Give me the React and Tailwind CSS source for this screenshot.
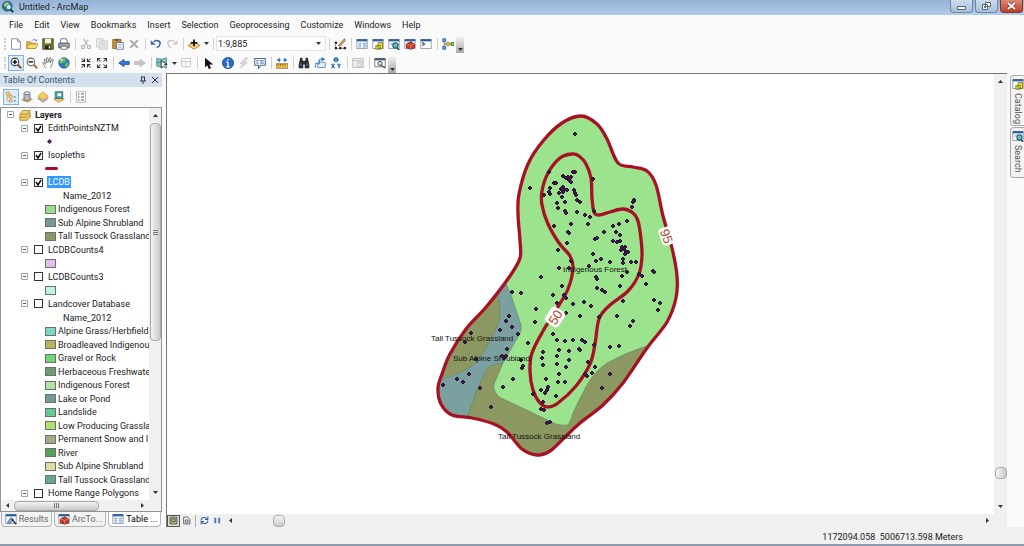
import React, { useState } from "react";

const menus = [
  "File",
  "Edit",
  "View",
  "Bookmarks",
  "Insert",
  "Selection",
  "Geoprocessing",
  "Customize",
  "Windows",
  "Help",
];

const layers = [
  { type: "layer", name: "EdithPointsNZTM", checked: true },
  { type: "point" },
  { type: "layer", name: "Isopleths", checked: true },
  { type: "line" },
  { type: "layer", name: "LCDB", checked: true, selected: true },
  { type: "field", name: "Name_2012" },
  { type: "class", name: "Indigenous Forest", color: "#98e28b" },
  { type: "class", name: "Sub Alpine Shrubland", color: "#6f9b98" },
  { type: "class", name: "Tall Tussock Grassland", color: "#8a9a62" },
  { type: "layer", name: "LCDBCounts4" },
  { type: "class", name: "", color: "#e6bff2" },
  { type: "layer", name: "LCDBCounts3" },
  { type: "class", name: "", color: "#bdf3e2" },
  { type: "layer", name: "Landcover Database" },
  { type: "field", name: "Name_2012" },
  { type: "class", name: "Alpine Grass/Herbfield", color: "#7fd6c6" },
  { type: "class", name: "Broadleaved Indigenou", color: "#b3b45f" },
  { type: "class", name: "Gravel or Rock", color: "#6fd674" },
  { type: "class", name: "Herbaceous Freshwate", color: "#6f9a70" },
  { type: "class", name: "Indigenous Forest", color: "#aee5a2" },
  { type: "class", name: "Lake or Pond", color: "#6f9b98" },
  { type: "class", name: "Landslide", color: "#68c795" },
  { type: "class", name: "Low Producing Grassla", color: "#aee26f" },
  { type: "class", name: "Permanent Snow and I", color: "#a0ad7c" },
  { type: "class", name: "River", color: "#55a157" },
  { type: "class", name: "Sub Alpine Shrubland", color: "#e0dda0" },
  { type: "class", name: "Tall Tussock Grassland", color: "#62a88c" },
  { type: "layer", name: "Home Range Polygons" },
];

const isopleth95 = [
  [581, 116], [597, 124], [607, 139], [618, 163], [633, 167], [647, 171],
  [656, 185], [663, 216], [672, 248], [677, 276], [676, 298], [667, 322],
  [647, 348], [623, 383], [603, 405], [580, 423], [564, 438], [550, 451],
  [537, 455], [522, 449], [507, 432], [494, 424], [472, 418], [452, 415],
  [441, 404], [438, 388], [442, 374], [450, 354], [466, 329], [487, 306],
  [510, 276], [520, 258], [520, 241], [518, 214], [519, 194], [528, 164],
  [543, 141], [562, 123],
];

const isopleth50 = [
  [572, 154], [560, 158], [548, 173], [542, 191], [542, 205], [548, 224],
  [559, 243], [570, 256], [573, 268], [568, 289], [556, 310], [543, 331],
  [532, 353], [530, 371], [533, 390], [540, 403], [548, 407], [558, 403],
  [576, 386], [590, 364], [595, 344], [599, 319], [609, 306], [628, 291],
  [639, 274], [642, 256], [641, 239], [638, 221], [633, 213], [623, 209],
  [610, 212], [599, 215], [594, 212], [592, 198], [591, 178], [586, 164],
  [579, 156],
];

const points = [
  [575, 134], [549, 172], [530, 188], [593, 179], [544, 195], [575, 172],
  [573, 172], [563, 176], [568, 177], [571, 177], [566, 178], [569, 180],
  [571, 182], [554, 183], [556, 183], [550, 188], [549, 192], [550, 194],
  [563, 187], [561, 189], [564, 189], [567, 190], [559, 193], [563, 192],
  [574, 190], [575, 193], [576, 195], [562, 197], [565, 202], [577, 200],
  [580, 202], [557, 203], [558, 208], [565, 211], [566, 213], [577, 212],
  [585, 215], [590, 217], [594, 211], [588, 224], [571, 224], [554, 226],
  [568, 232], [569, 233], [567, 243], [558, 250], [634, 200], [634, 201],
  [633, 202], [632, 207], [627, 221], [619, 224], [613, 226], [616, 232],
  [620, 235], [604, 232], [595, 239], [597, 238], [613, 241], [617, 242],
  [620, 241], [622, 247], [625, 247], [621, 250], [624, 249], [626, 252],
  [628, 252], [625, 254], [593, 254], [601, 259], [596, 261], [610, 262],
  [623, 259], [623, 263], [631, 262], [636, 262], [589, 266], [571, 261],
  [559, 268], [569, 268], [627, 272], [622, 276], [541, 277], [639, 274],
  [642, 276], [653, 271], [654, 272], [562, 286], [512, 292], [521, 293],
  [553, 295], [564, 295], [566, 298], [557, 303], [573, 304], [584, 302],
  [591, 306], [536, 309], [535, 322], [566, 313], [580, 316], [596, 277],
  [597, 279], [597, 288], [602, 290], [605, 292], [620, 286], [623, 301],
  [646, 284], [654, 300], [660, 303], [658, 310], [599, 317], [617, 316],
  [633, 321], [630, 326], [553, 334], [557, 340], [565, 341], [573, 340],
  [582, 340], [585, 342], [594, 345], [610, 347], [619, 346], [528, 343],
  [543, 352], [559, 350], [569, 351], [579, 349], [580, 350], [542, 358],
  [557, 356], [569, 360], [543, 365], [557, 364], [566, 367], [588, 362],
  [595, 367], [592, 373], [585, 374], [587, 376], [559, 374], [546, 379],
  [558, 382], [565, 382], [548, 387], [541, 390], [547, 390], [545, 393],
  [533, 394], [556, 396], [543, 402], [541, 409], [544, 410], [547, 423],
  [550, 422], [610, 374], [602, 388], [523, 366], [522, 368], [521, 360],
  [513, 379], [503, 387], [491, 407], [509, 316], [506, 321], [512, 327],
  [500, 330], [518, 334], [507, 349], [502, 356], [506, 356], [504, 358],
  [471, 333], [465, 342], [476, 359], [469, 374], [457, 379], [463, 382],
  [443, 385], [480, 388],
];

// closed Catmull-Rom curve through the given points
const closedCurve = (pts) => {
  const n = pts.length;
  let d = `M${pts[0][0]} ${pts[0][1]}`;
  for (let i = 0; i < n; i++) {
    const a = pts[(i - 1 + n) % n];
    const b = pts[i];
    const c = pts[(i + 1) % n];
    const e = pts[(i + 2) % n];
    d += ` C${b[0] + (c[0] - a[0]) / 6} ${b[1] + (c[1] - a[1]) / 6} ${
      c[0] - (e[0] - b[0]) / 6
    } ${c[1] - (e[1] - b[1]) / 6} ${c[0]} ${c[1]}`;
  }
  return d + "Z";
};

const outer = closedCurve(isopleth95);
const inner = closedCurve(isopleth50);

const windowFrame = (
  <>
    <path d="M1 2h14v12H1z" fill="#fff" stroke="#7d8b9c" />
    <path d="M1 1.500h14v3H1z" fill="#2f5f9e" />
  </>
);

const icons = {
  new: <path d="M2 1h8l4 4v10H2z M10 1v4h4" fill="#fff" stroke="#6b7280" />,
  open: (
    <>
      <path d="M1 14V5h5l1 2h6v7z" fill="#e8b93c" stroke="#a67c1e" />
      <path d="M1 14l3-6h12l-3 6z" fill="#fbdc78" stroke="#b38a2a" />
      <path d="M8 4c1-3 5-3 6 0m0 0l-2-1m2 1l1-2" fill="none" stroke="#3f7fc4" />
    </>
  ),
  save: (
    <>
      <path d="M1 1h14v14H1z" fill="#7a7a2c" stroke="#33330f" />
      <path d="M4 1h8v6H4z" fill="#f4f4ee" />
      <path d="M4 10h8v5H4z" fill="#24241a" />
      <path d="M9 11h2v3H9z" fill="#fff" />
    </>
  ),
  print: (
    <>
      <path d="M4 1h7l2 6H3z" fill="#fff" stroke="#555" />
      <path d="M1 7h14v6H1z" fill="#9da3aa" stroke="#44484d" />
      <path d="M4 11h8v4H4z" fill="#fff" stroke="#555" />
      <path d="M11 9h2" stroke="#e7d13b" strokeWidth="2" />
    </>
  ),
  cut: (
    <g fill="none" stroke="#b5b5b5" strokeWidth="1.600">
      <path d="M5 1l5 9M11 2L6 10" />
      <circle cx="4" cy="12" r="2.200" />
      <circle cx="12" cy="12" r="2.200" />
    </g>
  ),
  copy: (
    <g fill="#f1f1f1" stroke="#b9b9b9">
      <path d="M1 1h8v11H1z" />
      <path d="M5 4h10v11H5zM7 7h6M7 9h6M7 12h6" />
    </g>
  ),
  paste: (
    <>
      <path d="M1 2h11v12H1z" fill="#c98d2d" stroke="#7d5313" />
      <path d="M4 1h5v3H4z" fill="#666" />
      <path d="M6 6h9v9H6z" fill="#fff" stroke="#41618f" />
      <path d="M8 9h5M8 12h5" stroke="#6a86b0" />
    </>
  ),
  delete: <path d="M3 3l10 10M13 3L3 13" stroke="#aaaaaa" strokeWidth="2.500" />,
  undo: (
    <>
      <path d="M5 5c5-4 10 0 8 4-1 3-3 3-4 4" fill="none" stroke="#3a69a8" strokeWidth="2" />
      <path d="M1 3v6h7z" fill="#3a69a8" />
    </>
  ),
  redo: (
    <>
      <path d="M11 5C6 1 1 5 3 9c1 3 3 3 4 4" fill="none" stroke="#c9c9c9" strokeWidth="2" />
      <path d="M15 3v6H8z" fill="#c9c9c9" />
    </>
  ),
  addData: (
    <>
      <path d="M0 10l8-5 8 5-8 5z" fill="#f8d37b" stroke="#a16d12" />
      <path d="M8 2v9M3.500 6.500h9" stroke="#161616" strokeWidth="2.500" />
    </>
  ),
  editor: (
    <>
      <path d="M2 6v8h12" fill="none" stroke="#333" strokeDasharray="2 1" />
      <path d="M1 5h3v3H1zM1 12h3v3H1zM7 12h3v3H7zM13 12h3v3h-3z" fill="#222" />
      <path d="M6 10l8-9 1 2-7 8z" fill="#e9ae52" stroke="#77501a" />
    </>
  ),
  table: (
    <>
      {windowFrame}
      <path d="M3 7h4M3 9.500h4M3 12h4M9 7h5M9 9.500h5M9 12h5" stroke="#3d78b8" />
    </>
  ),
  catalog: (
    <>
      {windowFrame}
      <path d="M8 6h6v8H8zM5 10h6v5H5z" fill="#e5d52e" stroke="#77731c" />
    </>
  ),
  search: (
    <>
      {windowFrame}
      <path d="M3 7h6M3 9h4" stroke="#8ea6c1" />
      <circle cx="10" cy="10" r="3.500" fill="#66bfa4" stroke="#286683" strokeWidth="1.500" />
      <path d="M12 13l3 3" stroke="#245269" strokeWidth="2" />
    </>
  ),
  toolbox: (
    <>
      {windowFrame}
      <path d="M3 8l6-3 5 3v5l-5 2-6-2z" fill="#c8372b" stroke="#7b1d18" />
      <path d="M3 8l6 2 5-2M9 10v5" fill="none" stroke="#ee8b7c" />
    </>
  ),
  python: (
    <>
      {windowFrame}
      <path d="M3 6l3 2-3 2" fill="none" stroke="#202f66" strokeWidth="1.500" />
    </>
  ),
  model: (
    <>
      <path d="M3 4v8M4 8h9" stroke="#555" fill="none" />
      <path d="M1 1h4v4H1zM1 11h4v4H1z" fill="#5da1e8" stroke="#2760a7" />
      <path d="M5 8l3-3 3 3-3 3z" fill="#f1b640" stroke="#8a661c" />
      <path d="M12 6h4v4h-4z" fill="#7ac957" stroke="#387729" />
    </>
  ),
  zoomIn: (
    <>
      <circle cx="6.500" cy="6.500" r="5" fill="#fff" stroke="#444" strokeWidth="1.400" />
      <path d="M6.500 3.500v6M3.500 6.500h6" stroke="#111" strokeWidth="2" />
      <path d="M10 10l5 5" stroke="#7a4a2a" strokeWidth="2.500" />
    </>
  ),
  zoomOut: (
    <>
      <circle cx="6.500" cy="6.500" r="5" fill="#fff" stroke="#666" strokeWidth="1.400" />
      <path d="M3.500 6.500h6" stroke="#222" strokeWidth="2" />
      <path d="M10 10l5 5" stroke="#a86c50" strokeWidth="2.500" />
    </>
  ),
  pan: (
    <path
      d="M5 15L1 8c0-2 2-1 4 2L3 4c0-2 2-2 2 0l2 4-1-6c0-2 2-2 2 0l1 5 1-5c0-2 2-2 2 0l-1 6 2-4c1-2 2-1 2 0l-2 7-2 4"
      fill="#fff"
      stroke="#666"
    />
  ),
  globe: (
    <>
      <circle cx="8" cy="8" r="7" fill="#2e79c4" stroke="#27568a" />
      <path d="M3 4c3-3 7-3 8-1L9 7l-4 1-3 2zM9 9l5-2c1 3-1 6-4 7z" fill="#68c04c" />
      <path d="M3 4c1-2 3-2 4-1L5 6z" fill="#dff3d5" />
    </>
  ),
  fixedIn: (
    <path
      d="M2 2l4 4M14 2l-4 4M2 14l4-4M14 14l-4-4M2 6h4V2M14 6h-4V2M2 10h4v4M14 10h-4v4"
      stroke="#333"
      strokeWidth="1.400"
      fill="none"
    />
  ),
  fixedOut: (
    <path
      d="M2 2l4 4M14 2l-4 4M2 14l4-4M14 14l-4-4M2 6V2h4M14 6V2h-4M2 10v4h4M14 10v4h-4"
      stroke="#333"
      strokeWidth="1.400"
      fill="none"
    />
  ),
  back: <path d="M1 8l7-5v3h7v4H8v3z" fill="#3677d2" stroke="#1f529d" />,
  forward: <path d="M15 8L8 3v3H1v4h7v3z" fill="#c6c6c6" stroke="#b8b8b8" />,
  select: (
    <>
      <path d="M1 2l7 1 6-2v10l-6 3-7-2z" fill="#83cbc3" stroke="#31788a" />
      <path d="M1 8l6-2 7 3M7 3v10" fill="none" stroke="#31788a" />
      <path d="M7 5v10l3-3 3 3 1-2-3-3h4z" fill="#fff" stroke="#222" />
    </>
  ),
  clear: (
    <g fill="none" stroke="#c9c9c9" strokeWidth="1.300">
      <path d="M2 2h12v11H2zM2 6h12M8 6v7" />
    </g>
  ),
  pointer: <path d="M4 1v13l3-3 2 5 3-1-2-5h5z" fill="#111" />,
  info: (
    <>
      <circle cx="8" cy="8" r="7.500" fill="#286cc8" stroke="#184887" />
      <path d="M8 3v2M8 7v6M6 7h2M6 13h4" stroke="#fff" strokeWidth="1.800" />
    </>
  ),
  hyperlink: <path d="M10 1L3 9h4l-4 6 10-8H8l5-6z" fill="#dcdcdc" stroke="#c0c0c0" />,
  popup: (
    <>
      <path d="M1 2h14v9H9l-3 4v-4H1z" fill="#fff" stroke="#456b99" strokeWidth="1.400" />
      <path d="M3 5h3M8 5h5M3 8h3M8 8h5" stroke="#315e96" strokeWidth="1.400" />
    </>
  ),
  measure: (
    <>
      <path d="M1 4l4-3v2h1v2H5v2zM15 4l-4-3v2h-1v2h1v2z" fill="#2a6abb" />
      <path d="M0 9h16v6H0z" fill="#eac04d" stroke="#95681d" />
      <path d="M3 9v3M6 9v3M9 9v3M12 9v3" stroke="#73501b" />
    </>
  ),
  find: (
    <>
      <path d="M3 1h3v4h4V1h3l2 9v5H9v-5H7v5H1v-5z" fill="#272d36" />
      <path d="M4 8v4M12 8v4" stroke="#8d96a4" />
    </>
  ),
  route: (
    <>
      <path d="M5 7h10v7H5z" fill="#e4f1fb" stroke="#3f7bae" />
      <path d="M2 14V9h5V3h5" fill="none" stroke="#2c74ba" strokeWidth="1.600" strokeDasharray="3 1" />
      <path d="M10 0l5 3-5 3z" fill="#2c74ba" />
    </>
  ),
  xy: (
    <g fill="none" stroke="#2363a9" strokeWidth="1.600">
      <circle cx="8" cy="3.500" r="2.500" />
      <path d="M8 0v7M4 3.500h8" strokeWidth="1" />
      <path d="M2 9l4 6M6 9l-4 6M10 9l2 3 2-3M12 12v3" />
    </g>
  ),
  time: (
    <g fill="#f1f1f1" stroke="#bcbcbc" strokeWidth="1.200">
      <path d="M1 2h14v12H1zM1 5h14" />
      <circle cx="10" cy="9.500" r="3.500" />
      <path d="M10 7.500v2h2" fill="none" />
    </g>
  ),
  viewer: (
    <>
      <path d="M1 2h14v11H1z" fill="#fff" stroke="#555" />
      <path d="M1 1.500h14v3H1z" fill="#475a78" />
      <circle cx="8" cy="8.500" r="2.800" fill="#dbe9f5" stroke="#333" strokeWidth="1.200" />
      <path d="M10 11l5 4" stroke="#874f34" strokeWidth="2" />
    </>
  ),
  drawOrder: (
    <>
      <path d="M1 2l4-1 2 3-4 2zM5 6l4-1 2 3-4 2zM5 12l4-1 1 3-4 1z" fill="#f7cf7c" stroke="#c9943a" />
      <path d="M3 6v7h2M3 8h3" fill="none" stroke="#b9a06b" />
      <path d="M13 7v2M13 12v2" stroke="#3c85c8" strokeWidth="2" />
    </>
  ),
  source: (
    <>
      <path d="M1 12l6-4 8 3-6 4z" fill="#f1c65c" stroke="#b78a2b" />
      <path d="M4 3v8c0 2 8 2 8 0V3z" fill="#b7bdc8" stroke="#565d6b" />
      <ellipse cx="8" cy="3" rx="4" ry="2" fill="#e9ecf2" stroke="#565d6b" />
    </>
  ),
  visibility: (
    <>
      <path d="M1 10l7-4 7 4-7 5z" fill="#b5b5b5" stroke="#8b8b8b" />
      <path d="M1 7l7-6 7 6-7 5z" fill="#f5cb62" stroke="#d0a045" />
    </>
  ),
  selection: (
    <>
      <path d="M1 11l7-4 7 4-7 4z" fill="#f5cb62" stroke="#b98a2c" />
      <path d="M3 1h10v9H3z" fill="#38a3ae" stroke="#2d6172" />
      <path d="M6 3h5v4H6z" fill="#fff" />
    </>
  ),
  options: (
    <>
      <path d="M2 1h12v14H2z" fill="#fff" stroke="#a0a0a0" />
      <path d="M4 4h2M8 4h4M4 8h2M8 8h4M4 12h2M8 12h4" stroke="#4c5a6e" strokeWidth="1.400" />
    </>
  ),
  results: (
    <>
      {windowFrame}
      <path d="M3 13l5-7 3 3-4 5z" fill="#77acd8" stroke="#275f97" />
      <path d="M9 8l6 7" stroke="#333" strokeWidth="2" />
    </>
  ),
  layers: (
    <g fill="#f3cc6d" stroke="#a87920">
      <path d="M1 15v-3l4-4h10v3l-4 4z" />
      <path d="M1 11V9l4-4h10v2l-4 4z" />
      <path d="M1 7l4-5h10l-4 5z" />
    </g>
  ),
  dataView: <path d="M2 2h12v12H2zM5 5h6v5H5z" fill="#b6ce8e" stroke="#38462b" strokeWidth="1.500" />,
  layoutView: <path d="M3 2h7l4 4v8H3zM6 7h5v4H6z" fill="#fff" stroke="#444" strokeWidth="1.500" />,
  refresh: (
    <g fill="none" stroke="#2b5fae" strokeWidth="1.800">
      <path d="M2 8c0-6 8-7 11-3M14 8c0 6-8 7-11 3" />
      <path d="M14 1v5H9M2 15v-5h5" />
    </g>
  ),
  pause: <path d="M4 3v10M11 3v10" stroke="#4b7bbd" strokeWidth="3.500" />,
};

const Icon = ({ name, className = "size-3" }) => (
  <svg viewBox="0 0 16 16" className={className} aria-hidden="true">
    {icons[name]}
  </svg>
);

const Arrow = ({ className = "" }) => (
  <svg viewBox="0 0 5 3" className={"h-[3px] w-[5px] " + className} aria-hidden="true">
    <path d="M0 0h5L2.500 3z" fill="#333" />
  </svg>
);

const ToolButton = ({ name, active }) => (
  <button
    type="button"
    aria-label={name}
    className={
      "flex h-4 w-4 shrink-0 items-center justify-center border " +
      (active ? "border-[#7db5e8] bg-[#dcedfb]" : "border-transparent")
    }
  >
    <Icon name={name} className="size-3 shrink-0" />
  </button>
);

const Tools = ({ names, active }) =>
  names.map((n) => <ToolButton key={n} name={n} active={n === active} />);

const Separator = () => (
  <div className="flex h-3 w-[6px] shrink-0 justify-center">
    <div className="w-px bg-[#d0d0d0]"></div>
  </div>
);

const Grip = () => (
  <div className="ml-1 mr-[2px] h-3 w-[2px] shrink-0 border-l-2 border-dotted border-[#cfcfcf]"></div>
);

const Overflow = () => (
  <button
    type="button"
    aria-label="toolbar options"
    className="flex h-4 w-2 items-end justify-center self-end bg-gradient-to-b from-[#f0f0f0] to-[#a9a9a9] pb-[2px]"
  >
    <Arrow />
  </button>
);

const TitleBar = () => (
  <header className="flex h-[15px] shrink-0 items-center bg-gradient-to-b from-[#94b2d6] to-[#b3cce8] pb-[2px] pl-[2px]">
    <svg viewBox="0 0 16 16" className="mr-[5px] size-3" aria-hidden="true">
      <circle cx="7" cy="7" r="6.500" fill="#287e79" stroke="#164b60" />
      <path d="M3 4c3-3 6-2 7 0L7 8 3 7z" fill="#a8dc94" />
      <circle cx="9" cy="8" r="3.500" fill="#d6effb" stroke="#245a77" />
      <path d="M11 11l4 4" stroke="#143d57" strokeWidth="2.500" />
    </svg>
    <h1 className="flex-1 text-[9px] leading-3">Untitled - ArcMap</h1>
    <div className="flex gap-[2px] self-start pr-px">
      <button
        type="button"
        aria-label="minimize"
        className="flex h-[13px] w-[23px] items-center justify-center rounded-b-sm border border-t-0 border-[#6f87a5] bg-gradient-to-b from-[#cddced] to-[#a7bfdb]"
      >
        <svg viewBox="0 0 9 8" className="h-2 w-[9px]" aria-hidden="true">
          <path d="M.5 4.500h8v3h-8z" fill="#fff" stroke="#5b6674" />
        </svg>
      </button>
      <button
        type="button"
        aria-label="restore"
        className="flex h-[13px] w-[23px] items-center justify-center rounded-b-sm border border-t-0 border-[#6f87a5] bg-gradient-to-b from-[#cddced] to-[#a7bfdb]"
      >
        <svg viewBox="0 0 9 8" className="h-2 w-[9px]" aria-hidden="true">
          <path d="M3.500.5h5v4h-5zM.5 2.500h5v5h-5z" fill="#fff" stroke="#5b6674" />
          <path d="M2.500 4.500h1v1h-1z" stroke="#5b6674" />
        </svg>
      </button>
      <button
        type="button"
        aria-label="close"
        className="flex h-[13px] w-[23px] items-center justify-center rounded-b-sm border border-t-0 border-[#7b3a35] bg-gradient-to-b from-[#dc8878] to-[#bf3a26]"
      >
        <svg viewBox="0 0 9 8" className="h-2 w-[9px]" aria-hidden="true">
          <path d="M1 1l7 6M8 1L1 7" stroke="#6b3833" strokeWidth="3" />
          <path d="M1 1l7 6M8 1L1 7" stroke="#fff" strokeWidth="1.800" />
        </svg>
      </button>
    </div>
  </header>
);

const Toolbars = () => {
  const [scale, setScale] = useState("1:9,885");
  return (
    <div className="flex shrink-0 flex-col">
      <div className="flex h-[19px] items-center">
        <Grip />
        <Tools names={["new", "open", "save", "print"]} />
        <Separator />
        <Tools names={["cut", "copy", "paste", "delete"]} />
        <Separator />
        <Tools names={["undo", "redo"]} />
        <Separator />
        <ToolButton name="addData" />
        <div className="flex w-2 justify-center">
          <Arrow />
        </div>
        <Separator />
        <div className="flex h-[15px] w-[110px] items-center border border-[#e2e2e2] bg-white pr-1">
          <input
            aria-label="Map scale"
            className="w-full min-w-0 bg-transparent pl-px text-[9px] leading-3 outline-none"
            value={scale}
            onChange={(e) => setScale(e.target.value)}
          />
          <Arrow className="shrink-0" />
        </div>
        <Separator />
        <ToolButton name="editor" />
        <Separator />
        <Tools names={["table", "catalog", "search", "toolbox", "python"]} />
        <Separator />
        <ToolButton name="model" />
        <Overflow />
      </div>
      <div className="flex h-5 items-center">
        <Grip />
        <Tools names={["zoomIn", "zoomOut", "pan", "globe"]} active="zoomIn" />
        <Separator />
        <Tools names={["fixedIn", "fixedOut"]} />
        <Separator />
        <Tools names={["back", "forward"]} />
        <Separator />
        <ToolButton name="select" />
        <div className="flex w-2 justify-center">
          <Arrow />
        </div>
        <ToolButton name="clear" />
        <Separator />
        <div className="mr-1 flex">
          <ToolButton name="pointer" />
        </div>
        <Tools names={["info", "hyperlink", "popup"]} />
        <Separator />
        <ToolButton name="measure" />
        <Separator />
        <Tools names={["find", "route", "xy"]} />
        <Separator />
        <ToolButton name="time" />
        <Separator />
        <ToolButton name="viewer" />
        <Overflow />
      </div>
    </div>
  );
};

const Expander = () => (
  <svg viewBox="0 0 7 7" className="size-[7px] shrink-0" aria-hidden="true">
    <path d="M.5.5h6v6h-6z" fill="#fff" stroke="#a5a5a5" />
    <path d="M2 3.500h3" stroke="#4c5a80" />
  </svg>
);

const LayerRow = ({ item }) => {
  const [checked, setChecked] = useState(!!item.checked);

  if (item.type === "layer") {
    return (
      <li className="flex min-h-0 items-center pl-5">
        <Expander />
        <label className="ml-[6px] flex items-center gap-1">
          <span className="relative flex size-[9px] shrink-0">
            <input
              type="checkbox"
              className="size-[9px] appearance-none border border-[#333] bg-white"
              checked={checked}
              onChange={(e) => setChecked(e.target.checked)}
            />
            {checked && (
              <svg viewBox="0 0 9 9" className="pointer-events-none absolute inset-0 size-[9px]" aria-hidden="true">
                <path d="M2 4l2 3 3-5" fill="none" stroke="#111" strokeWidth="1.500" />
              </svg>
            )}
          </span>
          <span
            className={
              "whitespace-nowrap px-px leading-3 " + (item.selected ? "bg-[#3399ff] text-white" : "")
            }
          >
            {item.name}
          </span>
        </label>
      </li>
    );
  }
  if (item.type === "field") {
    return <li className="flex min-h-0 items-center pl-[62px] leading-3">{item.name}</li>;
  }
  if (item.type === "point") {
    return (
      <li className="flex min-h-0 items-center pl-[46px]">
        <svg viewBox="0 0 5 5" className="size-[5px]" aria-hidden="true">
          <path d="M2.500 0L5 2.500 2.500 5 0 2.500z" fill="#4b1759" />
        </svg>
      </li>
    );
  }
  if (item.type === "line") {
    return (
      <li className="flex min-h-0 items-center pl-11">
        <div className="h-[3px] w-[13px] rounded-full bg-[#a50f26]"></div>
      </li>
    );
  }
  return (
    <li className="flex min-h-0 items-center gap-[2px] pl-11 leading-3">
      <span
        className="h-[9px] w-[11px] shrink-0 border border-[#6e6e6e]"
        style={{ backgroundColor: item.color }}
      ></span>
      <span className="whitespace-nowrap">{item.name}</span>
    </li>
  );
};

const TableOfContents = () => (
  <aside className="flex w-[162px] shrink-0 flex-col">
    <div className="flex h-[14px] shrink-0 items-center justify-between bg-[#d3e0ee] pl-[3px] pr-[3px] text-[#41546b]">
      <h2 className="text-[9px] leading-3">Table Of Contents</h2>
      <div className="flex gap-1">
        <button type="button" aria-label="auto hide">
          <svg viewBox="0 0 8 8" className="size-2" aria-hidden="true">
            <path d="M2.500 1v4M5.500 1v4M2 1h4M1 5h6M4 5v3" stroke="#333" fill="none" />
          </svg>
        </button>
        <button type="button" aria-label="close panel">
          <svg viewBox="0 0 8 8" className="size-2" aria-hidden="true">
            <path d="M1 1l6 6M7 1L1 7" stroke="#333" />
          </svg>
        </button>
      </div>
    </div>
    <div className="flex h-5 shrink-0 items-center pl-[3px]">
      <Tools names={["drawOrder", "source", "visibility", "selection"]} active="drawOrder" />
      <Separator />
      <ToolButton name="options" />
    </div>
    <div className="flex min-h-0 flex-1 flex-col border border-[#8e959e] bg-white">
      <div className="flex min-h-0 flex-1">
        <ul className="grid min-w-0 flex-1 auto-rows-fr text-[9px]">
          <li className="flex min-h-0 items-center pl-[6px] font-bold leading-3">
            <Expander />
            <Icon name="layers" className="ml-[5px] mr-1 size-3" />
            Layers
          </li>
          {layers.map((item, i) => (
            <LayerRow key={i} item={item} />
          ))}
        </ul>
        <div className="flex w-3 shrink-0 flex-col items-center bg-[#f0f0f0]">
          <Arrow className="my-[6px] rotate-180" />
          <div className="flex w-[11px] flex-[3] items-center justify-center rounded-sm border border-[#a8a8a8] bg-gradient-to-r from-[#f3f3f3] to-[#cbcbcb]">
            <div className="flex h-[5px] w-[5px] flex-col justify-center border-y border-[#777]">
              <div className="h-px bg-[#777]"></div>
            </div>
          </div>
          <div className="flex-[2]"></div>
          <Arrow className="my-[6px]" />
        </div>
      </div>
      <div className="flex h-[11px] shrink-0 items-center bg-[#f0f0f0] pr-3">
        <Arrow className="mx-1 rotate-90" />
        <div className="flex h-[10px] w-[85px] items-center justify-center rounded-sm border border-[#a8a8a8] bg-gradient-to-b from-[#f3f3f3] to-[#cbcbcb]">
          <div className="flex h-[5px] w-[5px] justify-center border-x border-[#777]">
            <div className="w-px bg-[#777]"></div>
          </div>
        </div>
        <div className="flex-1"></div>
        <Arrow className="mx-1 -rotate-90" />
      </div>
    </div>
    <div className="flex h-[15px] shrink-0 gap-[2px] px-px text-[9px] leading-3 text-[#666]">
      {[
        ["results", "Results"],
        ["toolbox", "ArcTo..."],
        ["table", "Table ..."],
      ].map(([icon, label]) => (
        <button
          key={label}
          type="button"
          className={
            "flex flex-auto items-center justify-center gap-[2px] whitespace-nowrap rounded-b-sm border border-t-0 border-[#b4b4b4] " +
            (icon === "table" ? "bg-white text-black" : "bg-[#f3f3f3]")
          }
        >
          <Icon name={icon} />
          {label}
        </button>
      ))}
    </div>
  </aside>
);

const MapCanvas = () => (
  <svg
    viewBox="167 74 827 440"
    className="block h-full w-full min-w-0 bg-white"
    fontFamily="'Liberation Sans', Arial, sans-serif"
    fontSize="8"
  >
    <clipPath id="homeRange">
      <path d={outer} />
    </clipPath>
    <g clipPath="url(#homeRange)" stroke="#6f8e6c" strokeWidth="0.800">
      <path d={outer} fill="#9ce38d" />
      <path
        d="M420 430L420 270L490 270L499 285Q497 294 501 312Q501 330 490 350Q480 372 460 385L430 430z"
        fill="#8b9861"
      />
      <path
        d="M498 290L505 282Q511 293 515 307L521 325Q522 331 519 335L503 363Q490 365 487 369Q477 388 467 418L430 430V382Q452 377 468 369Q482 358 492 337Q501 322 500 312Q500 299 498 290z"
        fill="#7aa09f"
      />
      <path
        d="M467 418Q477 388 487 369Q490 365 503 363L494 384Q493 393 501 398L556 424Q562 426 568 425Q571 421 573 413Q580 398 587 385Q595 371 607 363Q627 352 650 345L690 400L560 470H460z"
        fill="#8b9861"
      />
    </g>
    <g fill="none" stroke="#a81125" strokeWidth="3.300">
      <path d={outer} />
      <path d={inner} />
    </g>
    <g fill="#43184f" stroke="#2b1035" strokeWidth="1" strokeLinejoin="round">
      {points.map(([x, y], i) => (
        <path key={i} d={`M${x} ${y - 2}l2 2l-2 2l-2-2z`} />
      ))}
    </g>
    <g fill="#111">
      <text x="563" y="272">Indigenous Forest</text>
      <text x="431" y="341">Tall Tussock Grassland</text>
      <text x="453" y="361">Sub Alpine Shrubland</text>
      <text x="498" y="439">Tall Tussock Grassland</text>
    </g>
    <g fontSize="13" textAnchor="middle" fill="#b0452c">
      <g transform="translate(555 317) rotate(-58)">
        <rect x="-9" y="-8" width="18" height="16" rx="4" fill="#fff" />
        <text y="5">50</text>
      </g>
      <g transform="translate(667 236) rotate(70)">
        <rect x="-9" y="-7" width="18" height="14" rx="4" fill="#fff" />
        <text y="5">95</text>
      </g>
    </g>
  </svg>
);

const MapView = () => (
  <main className="ml-1 flex min-w-0 flex-1 border-l border-t border-[#777]">
    <div className="flex min-w-0 flex-1 flex-col">
      <div className="min-h-0 flex-1">
        <MapCanvas />
      </div>
      <div className="flex h-[13px] shrink-0 items-center bg-[#f0f0f0]">
        <button
          type="button"
          aria-label="data view"
          className="flex h-3 w-[13px] items-center justify-center border border-[#555] bg-[#dcdcdc]"
        >
          <Icon name="dataView" className="size-[9px]" />
        </button>
        <button type="button" aria-label="layout view" className="ml-[2px]">
          <Icon name="layoutView" className="size-[9px]" />
        </button>
        <div className="mx-1 h-3 w-px bg-[#aaa]"></div>
        <button type="button" aria-label="refresh">
          <Icon name="refresh" className="size-[9px]" />
        </button>
        <button type="button" aria-label="pause drawing" className="ml-1">
          <Icon name="pause" className="size-[9px]" />
        </button>
        <Arrow className="ml-[6px] rotate-90" />
        <div className="ml-10 h-3 w-3 rounded-sm border border-[#aaa] bg-gradient-to-b from-[#f5f5f5] to-[#c9c9c9]"></div>
        <div className="flex-1"></div>
        <Arrow className="mx-1 -rotate-90" />
      </div>
    </div>
    <div className="flex w-[13px] shrink-0 flex-col items-center bg-[#f0f0f0] pb-[13px]">
      <Arrow className="my-[6px] rotate-180" />
      <div className="flex-1"></div>
      <div className="h-3 w-3 rounded-sm border border-[#aaa] bg-gradient-to-r from-[#f5f5f5] to-[#c9c9c9]"></div>
      <div className="h-5"></div>
      <Arrow className="my-[6px]" />
    </div>
  </main>
);

const Dock = () => (
  <nav className="flex w-[17px] shrink-0 flex-col items-end gap-px pt-[2px] text-[9px] leading-3 text-[#555]">
    {[
      ["catalog", "Catalog"],
      ["search", "Search"],
    ].map(([icon, label]) => (
      <button
        key={label}
        type="button"
        className="flex h-[51px] w-[14px] flex-col items-center gap-[3px] rounded-l-sm border border-r-0 border-[#aaa] bg-[#f3f3f3] pt-[2px]"
      >
        <Icon name={icon} className="size-3 shrink-0" />
        <span className="[writing-mode:vertical-rl]">{label}</span>
      </button>
    ))}
  </nav>
);

const App = () => {
  return (
    <div className="flex h-screen flex-col overflow-hidden bg-[#fafafa] font-['Roboto','Noto_Sans',sans-serif] text-[#1a1a1a]">
      <TitleBar />
      <nav className="flex h-[19px] shrink-0 items-center gap-[11px] pl-[9px] text-[9px] leading-3">
        {menus.map((m) => (
          <button key={m} type="button">
            {m}
          </button>
        ))}
      </nav>
      <Toolbars />
      <div className="flex min-h-0 flex-1">
        <TableOfContents />
        <MapView />
        <Dock />
      </div>
      <footer className="flex h-[19px] shrink-0 items-center justify-end border-b-2 border-[#8c9aab] bg-[#f0f0f0] pr-[61px] pt-[3px] text-[9px] leading-3">
        <span className="whitespace-pre">1172094.058  5006713.598 Meters</span>
      </footer>
    </div>
  );
};

export default App;
